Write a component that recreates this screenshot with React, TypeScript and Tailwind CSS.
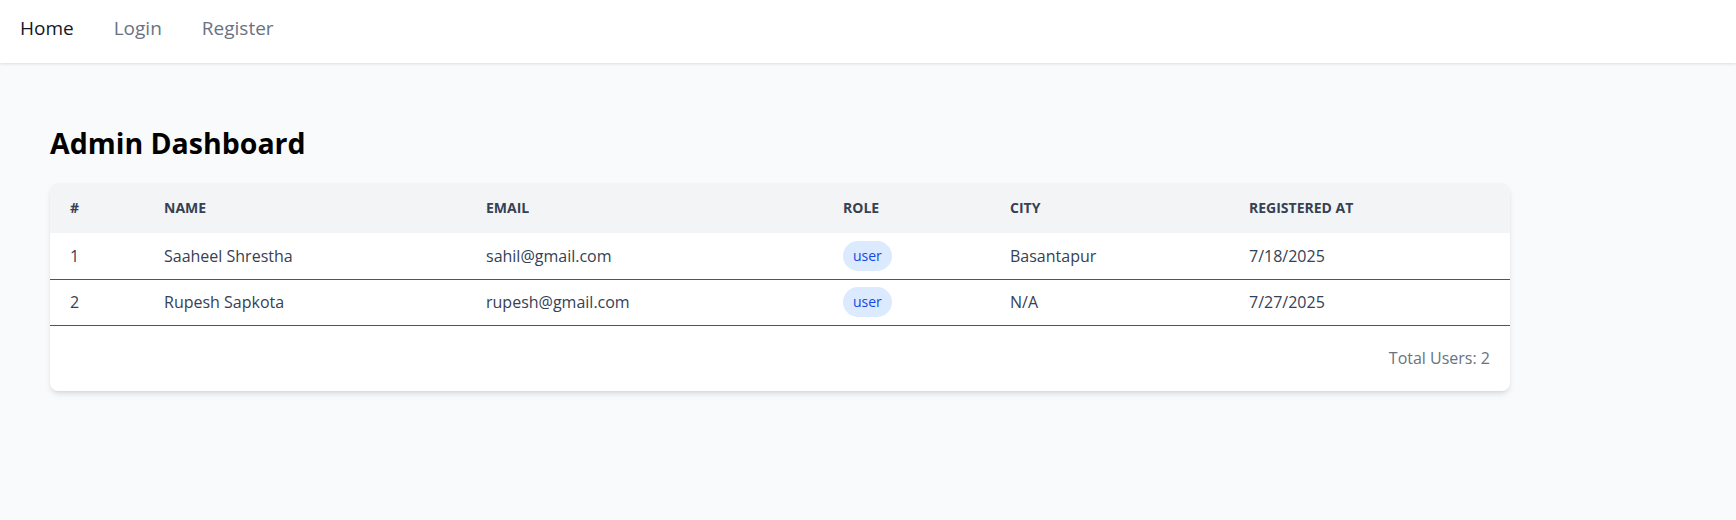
import React from "react";

const users = [
  { id: 1, name: "Saaheel Shrestha", email: "sahil@gmail.com", role: "user", city: "Basantapur", registeredAt: "7/18/2025" },
  { id: 2, name: "Rupesh Sapkota", email: "rupesh@gmail.com", role: "user", city: "N/A", registeredAt: "7/27/2025" },
];

const Navbar = () => {
  return (
    <nav className="h-[63px] pb-1.5 bg-white shadow-[0_1px_3px_rgba(0,0,0,0.12)] flex items-center gap-10 px-5 text-[19px] relative z-10">
      <a className="text-gray-900">Home</a>
      <a className="text-gray-500">Login</a>
      <a className="text-gray-500">Register</a>
    </nav>
  );
};

const App = () => {
  return (
    <div
      className="min-h-[520px] bg-gray-50"
      style={{ fontFamily: '"Segoe UI", "Open Sans", "Noto Sans", sans-serif' }}
    >
      <Navbar />
      <main className="w-[1460px] ml-[50px] pt-[62px]">
        <h1 className="text-[28.5px] leading-9 font-bold text-black mb-[22px]">Admin Dashboard</h1>
        <div className="bg-white rounded-lg shadow-md overflow-hidden">
          <table className="w-full border-collapse text-left">
            <thead className="bg-gray-100">
              <tr className="text-sm font-bold uppercase text-gray-700">
                <th className="w-[94px] h-[50px] px-5">#</th>
                <th className="w-[322px] px-5">Name</th>
                <th className="w-[357px] px-5">Email</th>
                <th className="w-[167px] px-5">Role</th>
                <th className="w-[239px] px-5">City</th>
                <th className="px-5">Registered At</th>
              </tr>
            </thead>
            <tbody>
              {users.map((u) => (
                <tr key={u.id} className="border-b border-gray-600 text-base text-gray-700">
                  <td className="h-[46px] px-5">{u.id}</td>
                  <td className="px-5">{u.name}</td>
                  <td className="px-5">{u.email}</td>
                  <td className="px-5">
                    <span className="inline-flex items-center h-[30px] px-2.5 rounded-full bg-blue-100 text-blue-700 text-sm">
                      {u.role}
                    </span>
                  </td>
                  <td className="px-5">{u.city}</td>
                  <td className="px-5">{u.registeredAt}</td>
                </tr>
              ))}
            </tbody>
          </table>
          <div className="h-[65px] px-5 flex items-center justify-end text-gray-500">
            Total Users: {users.length}
          </div>
        </div>
      </main>
    </div>
  );
};

export default App;
